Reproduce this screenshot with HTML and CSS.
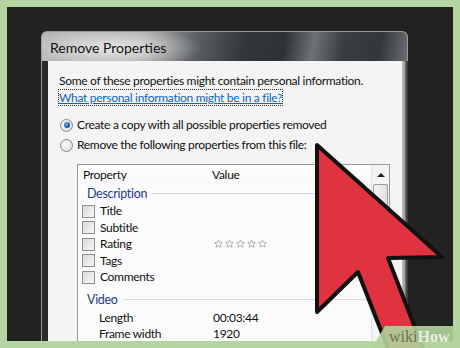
FILE: index.html
```html
<!DOCTYPE html>
<html>
<head>
<meta charset="utf-8">
<link rel="stylesheet" href="styles.css">
</head>
<body>
<div class="frame">
  <div class="dialog">
    <div class="titlebar"><span class="title">Remove Properties</span></div>
    <div class="winbody">
      <div class="edge-l"></div>
      <div class="client">
        <p class="intro">Some of these properties might contain personal information.</p>
        <p class="linkline"><a class="link">What personal information might be in a file?</a></p>
        <div class="options">
          <div class="radio-row"><span class="radio checked"></span><span>Create a copy with all possible properties removed</span></div>
          <div class="radio-row"><span class="radio"></span><span>Remove the following properties from this file:</span></div>
        </div>
        <div class="list">
          <div class="list-main">
            <div class="header"><span class="col-prop">Property</span><span class="col-val">Value</span></div>
            <div class="group"><span class="group-name">Description</span><span class="group-line"></span></div>
            <div class="row"><span class="check"></span><span class="label">Title</span></div>
            <div class="row"><span class="check"></span><span class="label">Subtitle</span></div>
            <div class="row"><span class="check"></span><span class="label">Rating</span>
              <span class="value stars">
                <svg width="56" height="10" viewBox="0 0 56 10">
                  <g fill="none" stroke="#a9a9a9" stroke-width="0.9" stroke-linejoin="round">
                    <path d="M4.5 0.8 L5.6 3.4 L8.4 3.6 L6.3 5.4 L7 8.2 L4.5 6.7 L2 8.2 L2.7 5.4 L0.6 3.6 L3.4 3.4 Z"/>
                    <path transform="translate(11 0)" d="M4.5 0.8 L5.6 3.4 L8.4 3.6 L6.3 5.4 L7 8.2 L4.5 6.7 L2 8.2 L2.7 5.4 L0.6 3.6 L3.4 3.4 Z"/>
                    <path transform="translate(22 0)" d="M4.5 0.8 L5.6 3.4 L8.4 3.6 L6.3 5.4 L7 8.2 L4.5 6.7 L2 8.2 L2.7 5.4 L0.6 3.6 L3.4 3.4 Z"/>
                    <path transform="translate(33 0)" d="M4.5 0.8 L5.6 3.4 L8.4 3.6 L6.3 5.4 L7 8.2 L4.5 6.7 L2 8.2 L2.7 5.4 L0.6 3.6 L3.4 3.4 Z"/>
                    <path transform="translate(44 0)" d="M4.5 0.8 L5.6 3.4 L8.4 3.6 L6.3 5.4 L7 8.2 L4.5 6.7 L2 8.2 L2.7 5.4 L0.6 3.6 L3.4 3.4 Z"/>
                  </g>
                </svg>
              </span>
            </div>
            <div class="row"><span class="check"></span><span class="label">Tags</span></div>
            <div class="row"><span class="check"></span><span class="label">Comments</span></div>
            <div class="group group-video"><span class="group-name">Video</span><span class="group-line"></span></div>
            <div class="row plain"><span class="label">Length</span><span class="value">00:03:44</span></div>
            <div class="row plain"><span class="label">Frame width</span><span class="value">1920</span></div>
          </div>
          <div class="scrollbar">
            <span class="up"></span>
            <span class="thumb"></span>
          </div>
        </div>
      </div>
      <div class="edge-r"></div>
    </div>
  </div>
</div>
<svg class="arrow" width="460" height="348" viewBox="0 0 460 348">
  <polygon points="317,145 317,312 358,272 391,356 426,356 388,258 442,257" fill="#e1333f" stroke="#111" stroke-width="4" stroke-linejoin="round"/>
</svg>
<div class="brand"><span class="wiki">wiki</span><span class="how">How</span></div>
</body>
</html>
```

FILE: styles.css
```css
html, body {
  margin: 0;
}
body {
  width: 460px;
  height: 348px;
  box-sizing: border-box;
  padding: 7px 7px 0 7px;
  background: #b5d5a0;
  overflow: hidden;
  position: relative;
  font-family: "Lato", "Open Sans", "DejaVu Sans", sans-serif;
  color: #111;
}
.frame {
  height: 334px;
  background: #222;
  overflow: hidden;
  box-sizing: border-box;
  padding: 24px 0 0 34px;
}
.dialog {
  width: 367px;
}
.titlebar {
  height: 30px;
  box-sizing: border-box;
  padding: 4px 0 0 8px;
  border-radius: 6px 6px 0 0;
  border: 1px solid #9a9a9a;
  border-bottom: none;
  background:
    radial-gradient(ellipse 90px 22px at 70px 16px, rgba(235,235,235,0.95), rgba(235,235,235,0) 100%),
    linear-gradient(100deg, #b4b4b4 0%, #a9a9a9 28%, #5d6166 42%, #33373c 55%, #2e3237 66%, #6d7276 74%, #3a3e42 82%, #33373b 92%, #6a6e72 100%);
}
.title {
  display: block;
  font-size: 14px;
  line-height: 26px;
  color: #111;
  margin-top: -1px;
}
.winbody {
  display: flex;
  height: 281px;
}
.edge-l {
  width: 7px;
  background: linear-gradient(to right, #9a9a9a 0 1px, #2a2a2a 1px);
}
.edge-r {
  width: 6px;
  background: linear-gradient(to right, #bdbdbd 0, #9c9c9c 3px, #4a4a4a 4px, #3a3a3a 6px);
}
.client {
  flex: 1;
  background: #f4f4f4;
  padding: 12px 0 0 11px;
  font-size: 12px;
  line-height: 16px;
  letter-spacing: -0.3px;
}
.intro, .linkline {
  margin: 0;
  white-space: nowrap;
}
.linkline {
  margin-top: 1px;
}
.link {
  color: #1066b8;
  text-decoration: underline;
  outline: 1px dotted #333;
  outline-offset: 0;
}
.options {
  margin-top: 11px;
  display: flex;
  flex-direction: column;
  gap: 4px;
}
.radio-row {
  display: flex;
  align-items: center;
  height: 16px;
  gap: 4px;
  margin-left: 1px;
  white-space: nowrap;
}
.radio {
  width: 11px;
  height: 11px;
  border-radius: 50%;
  border: 1px solid #888;
  background: radial-gradient(circle at 40% 40%, #fdfdfd, #d6d6d6);
  position: relative;
  flex: none;
}
.radio.checked::after {
  content: "";
  position: absolute;
  left: 2.5px;
  top: 2.5px;
  width: 6px;
  height: 6px;
  border-radius: 50%;
  background: radial-gradient(circle at 40% 35%, #6ab4f0, #1a5ea8 60%, #0c3c78);
}
.list {
  margin: 11px 12px 0 18px;
  height: 200px;
  border: 1px solid #9a9a9a;
  background: #fbfbfb;
  display: flex;
}
.list-main {
  flex: 1;
}
.header {
  height: 19px;
  line-height: 19px;
  display: flex;
  background: linear-gradient(#ffffff, #f8f8f8);
}
.col-prop {
  width: 128px;
  padding-left: 5px;
}
.col-val {
  padding-left: 1px;
}
.group {
  height: 19px;
  display: flex;
  align-items: center;
  padding-left: 9px;
}
.group-video {
  margin-top: 4px;
  height: 20.5px;
}
.group-name {
  color: #1e3a8c;
  font-size: 12.5px;
  padding-right: 5px;
}
.group-line {
  flex: 1;
  height: 1px;
  background: #d3dde6;
  margin-right: 2px;
}
.row {
  height: 16.5px;
  display: flex;
  align-items: center;
  padding-left: 4px;
  white-space: nowrap;
  line-height: 12px;
}
.row:last-child {
  height: 15.5px;
}
.row.plain {
  padding-left: 21px;
}
.check {
  width: 11px;
  height: 11px;
  border: 1px solid #8e8e8e;
  background: linear-gradient(135deg, #d9d9d9, #f8f8f8);
  flex: none;
  margin-right: 5px;
}
.label {
  width: 114px;
}
.value.stars {
  display: flex;
  align-items: center;
}
.scrollbar {
  width: 17px;
  border-left: 1px solid #e4e4e4;
  background: #f4f4f4;
  display: flex;
  flex-direction: column;
  align-items: center;
}
.up {
  width: 0;
  height: 0;
  margin-top: 8px;
  border-left: 4px solid transparent;
  border-right: 4px solid transparent;
  border-bottom: 4px solid #222;
}
.thumb {
  margin-top: 7px;
  width: 13px;
  height: 60px;
  border: 1px solid #9c9c9c;
  border-radius: 2px;
  background: linear-gradient(to right, #f4f4f4, #dedede);
}
.arrow {
  position: absolute;
  left: 0;
  top: 0;
  pointer-events: none;
}
.brand {
  position: absolute;
  left: 372px;
  top: 326px;
  width: 88px;
  height: 22px;
  clip-path: polygon(13px 0, 100% 0, 100% 100%, 0 100%);
  background: rgba(178, 211, 156, 0.9);
  font-family: "Liberation Serif", "DejaVu Serif", serif;
  font-size: 16px;
  font-weight: bold;
  line-height: 22px;
  padding-left: 17px;
  box-sizing: border-box;
  white-space: nowrap;
}
.wiki {
  color: rgba(70, 84, 60, 0.75);
  font-weight: normal;
}
.how {
  color: rgba(245, 248, 240, 0.85);
}
```
